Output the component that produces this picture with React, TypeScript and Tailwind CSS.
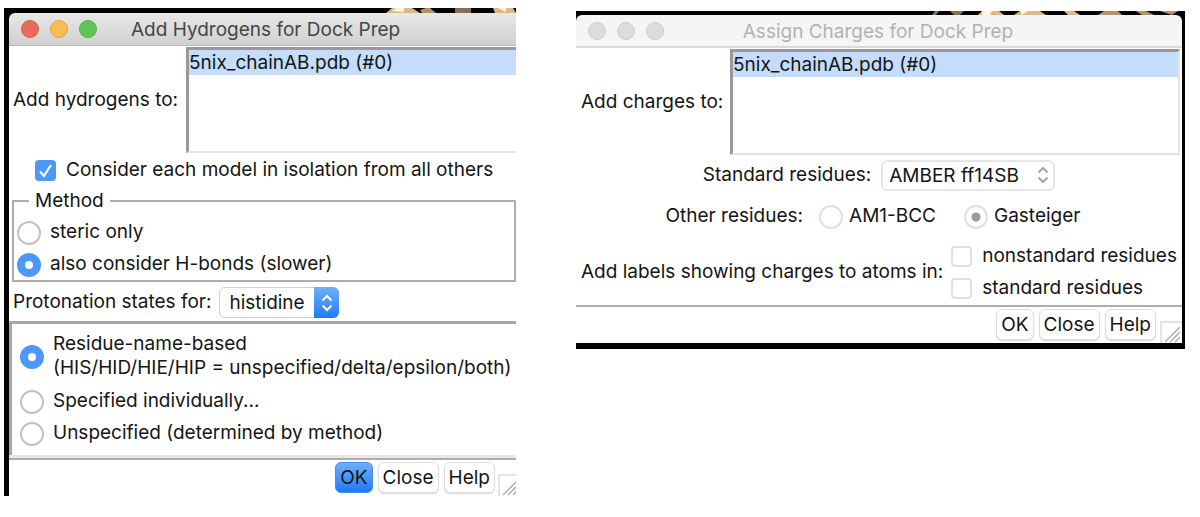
import type { ReactNode } from "react";

const ink = "text-[19px] leading-6 text-[#141414]";

function Arrows({ className }: { className: string }) {
  return (
    <svg viewBox="0 0 12 18" className={className} fill="none" stroke="currentColor" strokeWidth="2" aria-hidden="true">
      <path d="M1.5 6.5 6 2l4.500 4.500M1.500 11.500 6 16l4.500-4.500" />
    </svg>
  );
}

function Grip() {
  return (
    <svg viewBox="0 0 22 22" className="h-[22px] w-[22px] shrink-0" fill="none" aria-hidden="true">
      <path d="M1 22V1h21" stroke="#dcdcdc" strokeWidth="1.500" />
      <path d="M5 21 20 6M10 21l10-10M15 21l5-5" stroke="#a8a8a8" strokeWidth="1.300" />
    </svg>
  );
}

function Lights({ colors }: { colors: string[] }) {
  return (
    <div className="flex w-[78px] shrink-0 gap-[11px]">
      {colors.map((c, i) => (
        <span key={i} className={`h-[18px] w-[18px] rounded-full border ${c}`} />
      ))}
    </div>
  );
}

function ListBox({ id }: { id: string }) {
  return (
    <ul id={id} role="listbox" className="h-full">
      <li role="option" aria-selected="true" className="bg-[#c3ddfb] pt-px">
        5nix_chainAB.pdb (#0)
      </li>
    </ul>
  );
}

function Radio({ name, label, checked, muted }: { name: string; label: ReactNode; checked?: boolean; muted?: boolean }) {
  const look = muted
    ? "border-2 border-[#e0e0e0] checked:bg-[radial-gradient(circle,#9b9b9b_4px,#fff_5px)]"
    : "border-2 border-[#c2c2c2] checked:border-8 checked:border-[#4c98f7]";
  return (
    <label className={muted ? "flex items-center gap-1.5" : "flex items-center gap-[9px]"}>
      <input
        type="radio"
        name={name}
        defaultChecked={checked}
        className={`h-6 w-6 shrink-0 appearance-none rounded-full bg-white ${look}`}
      />
      <span className="pb-0.5 whitespace-nowrap">{label}</span>
    </label>
  );
}

function Check({ label }: { label: string }) {
  return (
    <label className="flex items-center gap-2.5 whitespace-nowrap">
      <input type="checkbox" className="h-[21px] w-[21px] shrink-0 appearance-none rounded-[4px] border-2 border-[#e0e0e0] bg-white" />
      {label}
    </label>
  );
}

function Button({ children, primary }: { children: string; primary?: boolean }) {
  return (
    <button
      type="button"
      className={`h-[31px] rounded-[6px] border px-1 ${
        primary
          ? "border-[#3d8df5] bg-linear-to-b from-[#6db0f8] to-[#1f78fa]"
          : "border-[#dedede] bg-white shadow-[0_1px_1px_#d8d8d8]"
      }`}
    >
      {children}
    </button>
  );
}

function HydrogensWindow() {
  return (
    <section className="border-l-[5px] border-black bg-white">
      <div className="flex h-[5px] justify-end bg-black">
        <svg viewBox="0 0 136 5" className="h-[5px] w-[136px]" aria-hidden="true">
          <path d="M6 5 12 0h20l8 5z" fill="#d9b98c" />
          <path d="M12 3 16 0h8v4z" fill="#fff3d8" />
          <path d="M40 2l6-2h4l6 5H42z" fill="#b39468" />
          <path d="M75 0h16v5H75z" fill="#85705a" />
          <path d="M113 0h20l3 5h-21z" fill="#d9b98c" />
          <path d="M118 0h8v4z" fill="#fff3d8" />
        </svg>
      </div>
      <div className="bg-black">
        <header className="flex h-[33px] items-center rounded-tl-[6px] border-b border-[#b8b8b8] bg-linear-to-b from-[#e9e8e9] to-[#d1d0d1] pl-3">
          <Lights colors={["border-[#dc5b50] bg-[#ec695e]", "border-[#dfa53b] bg-[#f5be4f]", "border-[#54ad45] bg-[#61c554]"]} />
          <h2 className="ml-8 pt-0.5 text-[19px] leading-6 text-[#454545]">Add Hydrogens for Dock Prep</h2>
        </header>
      </div>
      <div className="mt-px flex items-center">
        <label htmlFor="h-models" className="w-[177px] shrink-0 pl-1">
          Add hydrogens to:
        </label>
        <div className="h-[106px] grow border-t-[3px] border-b-2 border-l-[3px] border-t-[#999] border-b-[#e4e4e4] border-l-[#999]">
          <ListBox id="h-models" />
        </div>
      </div>
      <label className="mt-[5px] flex items-center gap-2.5 pl-[26px]">
        <span className="relative flex">
          <input type="checkbox" defaultChecked className="h-[21px] w-[21px] appearance-none rounded-[4px] bg-[#4c98f7]" />
          <svg viewBox="0 0 21 21" className="pointer-events-none absolute inset-0" fill="none" stroke="#fff" strokeWidth="2.200" aria-hidden="true">
            <path d="M5 11.500 9 16l7-11" />
          </svg>
        </span>
        Consider each model in isolation from all others
      </label>
      <fieldset className="mt-1.5 ml-[3px] border-2 border-[#adadad] pb-0.5 pl-[3px]">
        <legend className="ml-3 px-1.5 pt-px">Method</legend>
        <div className="flex flex-col gap-1.5 pt-[7px]">
          <Radio name="method" label="steric only" />
          <Radio name="method" label="also consider H-bonds (slower)" checked />
        </div>
      </fieldset>
      <div className="flex items-center gap-2 pt-[5px] pb-[3px] pl-1">
        <label htmlFor="residue" className="pb-0.5">Protonation states for:</label>
        <span className="relative flex">
          <select id="residue" className="h-[31px] w-[120px] appearance-none rounded-[6px] border border-[#cfcfcf] bg-white pl-[9px]">
            <option>histidine</option>
          </select>
          <span className="pointer-events-none absolute inset-y-0 right-0 flex w-[25px] items-center justify-center rounded-r-[6px] bg-linear-to-b from-[#6db0f8] to-[#1f78fa]">
            <Arrows className="h-[18px] w-3 text-white" />
          </span>
        </span>
      </div>
      <div className="flex flex-col border-t-[3px] border-l-[3px] border-[#a6a6a6] pt-2 pl-2">
        <Radio name="state" label={<>Residue-name-based<br />(HIS/HID/HIE/HIP = unspecified/delta/epsilon/both)</>} checked />
        <div className="mt-[7px] flex flex-col gap-1.5 pb-2">
          <Radio name="state" label="Specified individually..." />
          <Radio name="state" label="Unspecified (determined by method)" />
        </div>
      </div>
      <div className="h-[5px] border-b-2 border-[#adadad] bg-[#e8e8e8]" />
      <footer className="flex items-end justify-end">
        <div className="mr-[3px] flex gap-[5px] pt-0.5 pb-[3px]">
          <Button primary>OK</Button>
          <Button>Close</Button>
          <Button>Help</Button>
        </div>
        <div className="w-[18px] overflow-hidden"><Grip /></div>
      </footer>
    </section>
  );
}

function ChargesWindow() {
  return (
    <section className="mt-[3px] border-r-[3px] border-b-[6px] border-black bg-white">
      <div className="flex h-1 justify-end bg-black">
        <svg viewBox="0 0 250 4" className="h-1 w-[250px]" aria-hidden="true">
          <path d="M0 4 3 0h4L4 4zM18 0h14l-4 4h-6z" fill="#85705a" />
          <path d="M46 4 50 0h17l5 4zM82 4l6-4h20l6 4zM132 0h10l6 4h-12z" fill="#d9b98c" />
          <path d="M50 0h10l-2 4h-8zM88 0h8l-6 4z" fill="#fff3d8" />
          <path d="M166 4l6-4h14l4 4zM204 0h10l8 4h-12zM228 0h18l-6 4z" fill="#b39468" />
        </svg>
      </div>
      <div className="bg-black">
        <header className="flex h-[33px] items-center rounded-t-[6px] border-b-2 border-[#dadada] bg-[#f5f5f5] pl-3">
          <Lights colors={["border-[#cfcfcf] bg-[#dcdcdc]", "border-[#cfcfcf] bg-[#dcdcdc]", "border-[#cfcfcf] bg-[#dcdcdc]"]} />
          <h2 className="grow pt-0.5 pr-[92px] text-center text-[19px] leading-6 text-[#b2b2b2]">Assign Charges for Dock Prep</h2>
        </header>
      </div>
      <div className="mt-px mr-0.5 flex items-center">
        <label htmlFor="c-models" className="w-[154px] shrink-0 pl-[5px]">
          Add charges to:
        </label>
        <div className="h-[106px] grow border-t-[3px] border-r-2 border-b-2 border-l-[3px] border-t-[#999] border-r-[#e4e4e4] border-b-[#e4e4e4] border-l-[#999]">
          <ListBox id="c-models" />
        </div>
      </div>
      <div className="mt-[5px] flex items-center justify-center gap-2.5">
        <label htmlFor="standard" className="pb-0.5">Standard residues:</label>
        <span className="relative flex">
          <select id="standard" className="h-[31px] w-[174px] appearance-none rounded-[6px] border-2 border-[#e6e6e6] bg-white pl-1.5">
            <option>AMBER ff14SB</option>
          </select>
          <Arrows className="pointer-events-none absolute top-1.5 right-1.5 h-[18px] w-3 text-[#a3a3a3]" />
        </span>
      </div>
      <div role="radiogroup" aria-label="Other residues" className="mt-[13px] flex items-center justify-center pr-3">
        <span className="mr-4 pb-0.5">Other residues:</span>
        <Radio name="other" label="AM1-BCC" muted />
        <div className="ml-7"><Radio name="other" label="Gasteiger" checked muted /></div>
      </div>
      <div role="group" aria-label="Add labels showing charges to atoms in" className="mt-[14px] flex items-center gap-2 pl-[5px]">
        <span className="whitespace-nowrap">Add labels showing charges to atoms in:</span>
        <div className="flex flex-col gap-2">
          <Check label="nonstandard residues" />
          <Check label="standard residues" />
        </div>
      </div>
      <footer className="mt-[5px] flex items-end justify-end border-t-2 border-[#adadad]">
        <div className="mr-1 flex gap-[5px] pt-0.5 pb-[3px]">
          <Button>OK</Button>
          <Button>Close</Button>
          <Button>Help</Button>
        </div>
        <Grip />
      </footer>
    </section>
  );
}

export default function App() {
  return (
    <main className={`grid min-h-screen grid-cols-[512fr_609fr] items-start gap-[60px] bg-white pt-2 pr-[15px] pl-1 font-[Inter,sans-serif] ${ink}`}>
      <HydrogensWindow />
      <ChargesWindow />
    </main>
  );
}
